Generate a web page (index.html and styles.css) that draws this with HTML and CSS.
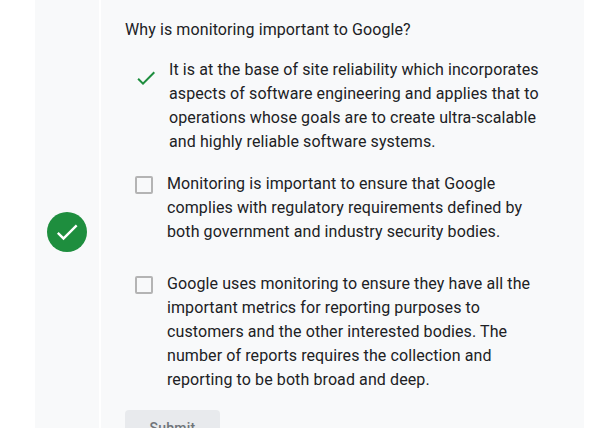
FILE: index.html
```html
<!DOCTYPE html>
<html lang="en">
<head>
  <meta charset="UTF-8" />
  <title>Quiz question</title>
  <link rel="stylesheet" href="styles.css">
</head>
<body>
  <div class="quiz">
    <div class="gutter">
      <div class="badge">
        <svg class="badge-check" viewBox="0 0 24 24"><path d="M9 16.17L4.83 12l-1.42 1.41L9 19 21 7l-1.41-1.41z"/></svg>
      </div>
    </div>
    <div class="question">
      <p class="prompt">Why is monitoring important to Google?</p>
      <div class="option correct">
        <svg class="tick" viewBox="0 0 24 24"><path d="M9 16.17L4.83 12l-1.42 1.41L9 19 21 7l-1.41-1.41z"/></svg>
        <div class="option-text">It is at the base of site reliability which incorporates aspects of software engineering and applies that to operations whose goals are to create ultra-scalable and highly reliable software systems.</div>
      </div>
      <div class="option second">
        <span class="box"></span>
        <div class="option-text">Monitoring is important to ensure that Google complies with regulatory requirements defined by both government and industry security bodies.</div>
      </div>
      <div class="option third">
        <span class="box"></span>
        <div class="option-text">Google uses monitoring to ensure they have all the important metrics for reporting purposes to customers and the other interested bodies. The number of reports requires the collection and reporting to be both broad and deep.</div>
      </div>
      <button class="submit">Submit</button>
    </div>
  </div>
</body>
</html>
```

FILE: styles.css
```css
html, body {
  height: 100%;
  overflow: hidden;
}
body {
  margin: 0;
  background: #fff;
  font-family: Roboto, sans-serif;
  font-size: 16px;
  line-height: 24px;
  letter-spacing: 0.1px;
  color: #202124;
}
.quiz {
  display: flex;
  gap: 2px;
  width: 549px;
  margin-left: 35px;
  height: 464px;
}
.gutter {
  width: 64px;
  flex-shrink: 0;
  display: flex;
  align-items: center;
  justify-content: center;
  background: #f8f9fa;
}
.badge {
  width: 40px;
  height: 40px;
  border-radius: 50%;
  background: #1e8e3e;
  display: flex;
  align-items: center;
  justify-content: center;
}
.badge-check {
  width: 28px;
  height: 28px;
  fill: #fff;
}
.question {
  flex: 1;
  padding: 18px 0 18px 24px;
  background: #f8f9fa;
}
.prompt {
  margin: 0 0 16px;
}
.option {
  display: flex;
  box-sizing: border-box;
  width: 422px;
}
.correct {
  padding-left: 9px;
  gap: 11px;
}
.tick {
  width: 24px;
  height: 24px;
  flex-shrink: 0;
  margin-top: 8px;
  fill: #1e8e3e;
}
.second {
  margin-top: 18px;
}
.third {
  margin-top: 28px;
}
.second, .third {
  padding-left: 10px;
  gap: 14px;
}
.box {
  width: 18px;
  height: 18px;
  box-sizing: border-box;
  flex-shrink: 0;
  margin-top: 4px;
  border: 2px solid #b4b4b4;
  border-radius: 2px;
}
.option-text {
  flex: 1;
}
.submit {
  display: block;
  width: 95px;
  height: 36px;
  margin-top: 18px;
  padding: 0;
  border: 0;
  border-radius: 4px;
  background: #e8eaed;
  font-family: Roboto, sans-serif;
  font-size: 14px;
  font-weight: 500;
  letter-spacing: 0.25px;
  color: #70757a;
}
```
